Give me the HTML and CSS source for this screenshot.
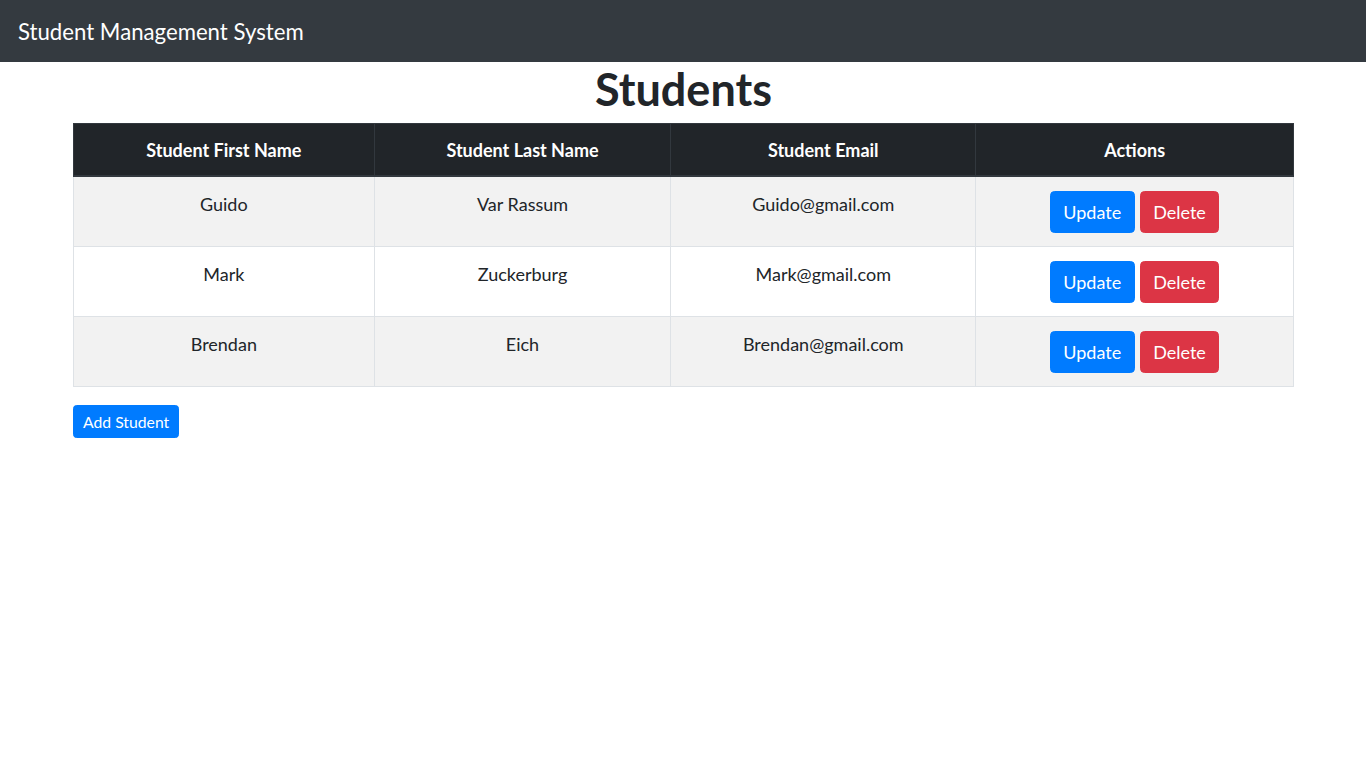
FILE: index.html
```html
<!DOCTYPE html>
<html lang="en">
<head>
<meta charset="utf-8">
<title>Student Management System</title>
<link rel="stylesheet" href="styles.css">
</head>
<body>
<nav class="navbar">
  <span class="brand">Student Management System</span>
</nav>
<main class="container">
  <h1 class="title">Students</h1>
  <table class="students">
    <colgroup>
      <col class="c1"><col class="c2"><col class="c3"><col class="c4">
    </colgroup>
    <thead>
      <tr>
        <th>Student First Name</th>
        <th>Student Last Name</th>
        <th>Student Email</th>
        <th>Actions</th>
      </tr>
    </thead>
    <tbody>
      <tr>
        <td>Guido</td>
        <td>Var Rassum</td>
        <td>Guido@gmail.com</td>
        <td><div class="actions"><button class="btn btn-primary">Update</button><button class="btn btn-danger">Delete</button></div></td>
      </tr>
      <tr>
        <td>Mark</td>
        <td>Zuckerburg</td>
        <td>Mark@gmail.com</td>
        <td><div class="actions"><button class="btn btn-primary">Update</button><button class="btn btn-danger">Delete</button></div></td>
      </tr>
      <tr>
        <td>Brendan</td>
        <td>Eich</td>
        <td>Brendan@gmail.com</td>
        <td><div class="actions"><button class="btn btn-primary">Update</button><button class="btn btn-danger">Delete</button></div></td>
      </tr>
    </tbody>
  </table>
  <button class="btn btn-primary btn-sm">Add Student</button>
</main>
</body>
</html>
```

FILE: styles.css
```css
* { box-sizing: border-box; }

body {
  margin: 0;
  font-family: Lato, "Open Sans", "Liberation Sans", sans-serif;
  font-size: 18px;
  line-height: 1.5;
  color: #212529;
  background: #fff;
}

.navbar {
  background: #343a40;
  padding: 9px 18px;
  height: 62px;
  display: flex;
  align-items: center;
}

.brand {
  color: #fff;
  font-size: 22.2px;
  line-height: 1.5;
  padding-top: 2px;
}

.container {
  margin: 0 72px 0 73px;
}

.title {
  margin: 0 0 7px;
  text-align: center;
  font-size: 45px;
  font-weight: 700;
  line-height: 54px;
}

.students {
  width: 100%;
  border-collapse: collapse;
  margin-bottom: 18px;
}

.c1 { width: 301px; }
.c2 { width: 297px; }
.c3 { width: 305px; }
.c4 { width: 318px; }

.students th,
.students td {
  padding: 13.5px;
  line-height: 24px;
  text-align: center;
  vertical-align: top;
  border: 1px solid #dee2e6;
}

.students td {
  padding-top: 15px;
  padding-bottom: 13px;
}

.students th {
  background: #212529;
  color: #fff;
  border-color: #32383e;
  border-bottom-width: 2px;
  font-weight: 700;
  vertical-align: bottom;
}

.students tbody tr:nth-child(odd) td {
  background: #f2f2f2;
}

.students td .actions {
  margin-top: -1px;
}

.actions {
  display: flex;
  justify-content: center;
  gap: 5px;
}

.btn {
  font-family: inherit;
  font-size: 18px;
  line-height: 27px;
  padding: 6.5px 12.5px;
  border: 1px solid transparent;
  border-radius: 4.5px;
  color: #fff;
  cursor: pointer;
}

.btn-primary { background: #007bff; border-color: #007bff; }
.btn-danger { background: #dc3545; border-color: #dc3545; }

.btn-sm {
  font-size: 15.75px;
  line-height: 22px;
  padding: 4.5px 9px;
  border-radius: 3.6px;
}
```
